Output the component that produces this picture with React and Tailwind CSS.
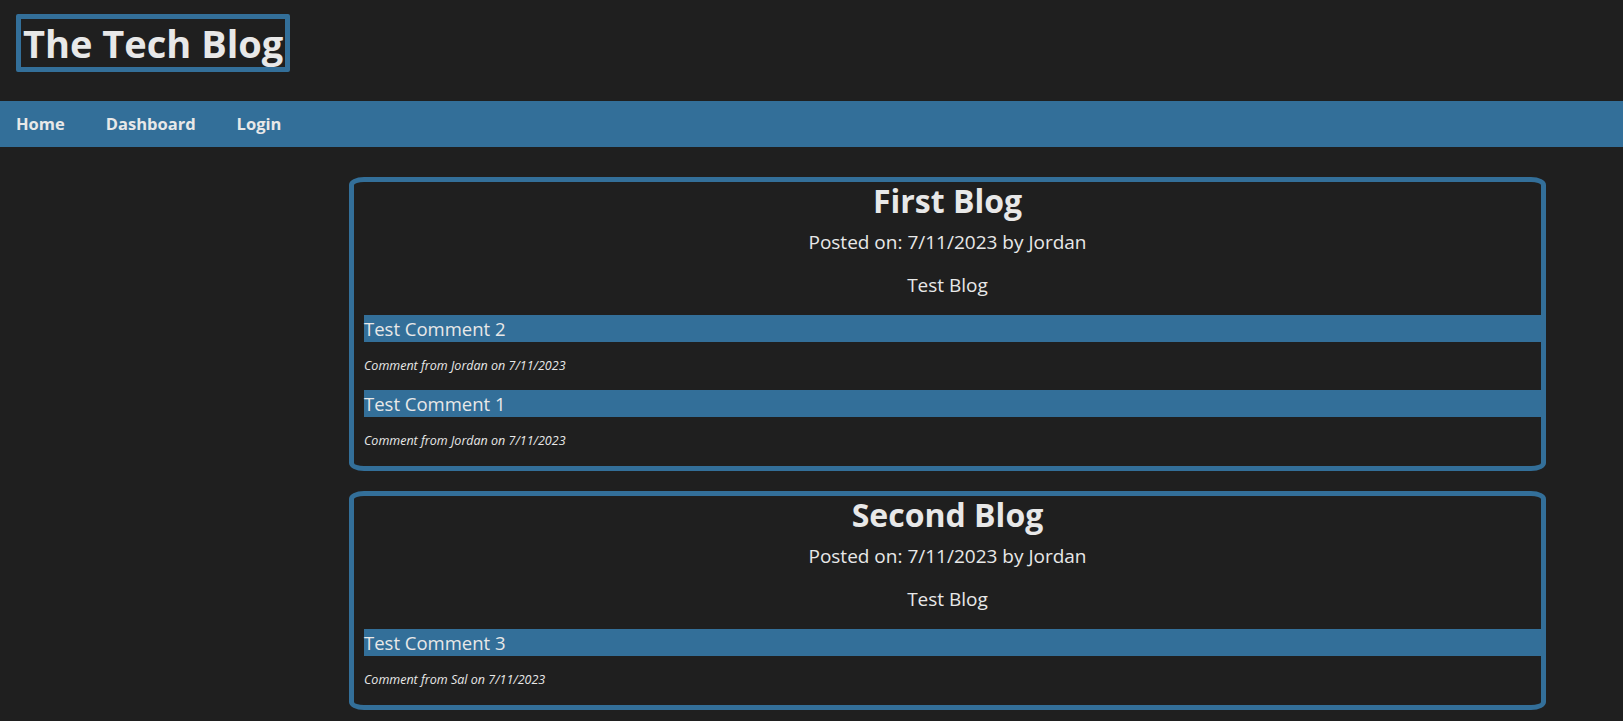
import React from "react";

const posts = [
  {
    title: "First Blog",
    date: "7/11/2023",
    author: "Jordan",
    body: "Test Blog",
    comments: [
      { text: "Test Comment 2", author: "Jordan", date: "7/11/2023" },
      { text: "Test Comment 1", author: "Jordan", date: "7/11/2023" },
    ],
  },
  {
    title: "Second Blog",
    date: "7/11/2023",
    author: "Jordan",
    body: "Test Blog",
    comments: [{ text: "Test Comment 3", author: "Sal", date: "7/11/2023" }],
  },
];

const PostCard = ({ post }) => {
  return (
    <div className="border-[5px] border-[#336f99] rounded-[15px_/_8px] text-[#e8e8e8] pb-[1px]">
      <h2 className="text-center text-[32px] leading-[37px] font-bold">{post.title}</h2>
      <p className="text-center text-[19px] leading-[24px] mt-[11px]">
        Posted on: {post.date} by {post.author}
      </p>
      <p className="text-center text-[19px] leading-[24px] mt-[19px]">{post.body}</p>
      <div className="ml-[10px] mt-[18px]">
        {post.comments.map((c, i) => (
          <div key={i}>
            <h3 className="bg-[#336f99] text-[18.5px] leading-[27px] h-[27px]">{c.text}</h3>
            <p className="italic text-[12.5px] leading-[16px] mt-[16px] mb-[16px]">
              Comment from {c.author} on {c.date}
            </p>
          </div>
        ))}
      </div>
    </div>
  );
};

export default function App() {
  return (
    <div className="min-h-screen bg-[#1f1f1f] font-['Open_Sans',sans-serif] text-[#e8e8e8] pb-4">
      <header className="pt-[14px] pl-[16px] pb-[29px]">
        <h1 className="inline-block border-[5px] border-[#336f99] rounded-[2px] text-[38px] leading-[48px] font-bold px-[2px]">
          The Tech Blog
        </h1>
      </header>

      <nav className="bg-[#336f99] h-[46px] flex items-center pl-[16px] gap-[41px] text-[16.5px] font-bold">
        <a href="#">Home</a>
        <a href="#">Dashboard</a>
        <a href="#">Login</a>
      </nav>

      <main className="ml-[349px] w-[1197px] pt-[30px] flex flex-col gap-[20px]">
        {posts.map((p, i) => (
          <PostCard key={i} post={p} />
        ))}
      </main>
    </div>
  );
}
